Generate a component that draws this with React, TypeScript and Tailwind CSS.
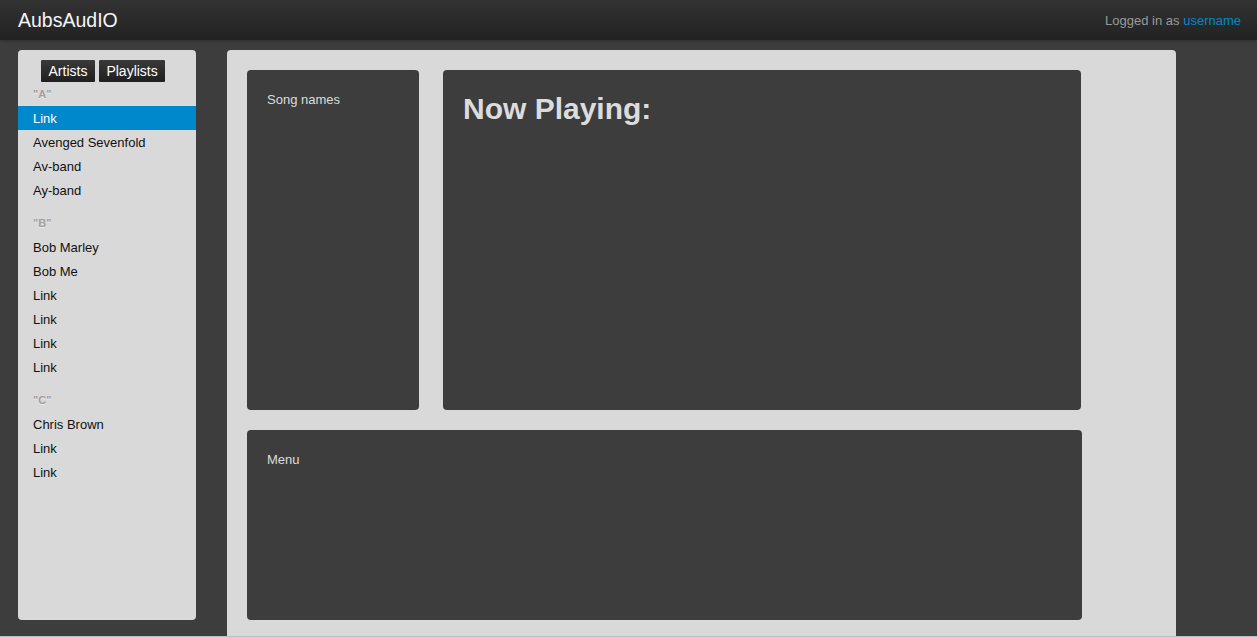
const font = { fontFamily: '"Liberation Sans", Arial, sans-serif' };

const groups = [
  { letter: "A", items: ["Link", "Avenged Sevenfold", "Av-band", "Ay-band"] },
  { letter: "B", items: ["Bob Marley", "Bob Me", "Link", "Link", "Link", "Link"] },
  { letter: "C", items: ["Chris Brown", "Link", "Link"] },
];

function Sidebar() {
  return (
    <div className="w-[178px] h-[570px] shrink-0 rounded-[4px] bg-[#d9d9d9] pt-[10px]">
      <div className="flex gap-[4px] pl-[23px]">
        {["Artists", "Playlists"].map((b) => (
          <button
            key={b}
            className="h-[22px] px-[7.5px] pt-[1px] text-[14px] leading-[21px] text-white bg-gradient-to-b from-[#3a3a3a] to-[#1f1f1f] rounded-[1px]"
          >
            {b}
          </button>
        ))}
      </div>
      {groups.map((g, gi) => (
        <div key={g.letter}>
          <div
            className={`${gi === 0 ? "mt-[2px]" : "mt-[11px]"} mb-[2px] h-[20px] pl-[15px] text-[11px] leading-[20px] font-bold text-[#a0a0a0] [text-shadow:0_1px_0_rgba(255,255,255,0.5)]`}
          >
            "{g.letter}"
          </div>
          {g.items.map((it, i) => {
            const active = gi === 0 && i === 0;
            return (
              <div
                key={i}
                className={`h-[24px] pl-[15px] pt-[2px] text-[13px] leading-[22px] ${active ? "bg-[#0088cc] text-white" : "text-[#111]"}`}
              >
                {it}
              </div>
            );
          })}
        </div>
      ))}
    </div>
  );
}

export default function App() {
  return (
    <div className="h-[637px] w-full flex flex-col bg-[#3d3d3d] overflow-hidden" style={font}>
      <div className="h-[40px] shrink-0 flex items-center justify-between pt-[1px] pl-[18px] pr-[16px] bg-gradient-to-b from-[#333333] to-[#222222] shadow-[0_1px_3px_rgba(0,0,0,0.25)]">
        <span className="text-[19.5px] text-[#f5f5f5]">AubsAudIO</span>
        <span className="text-[13px] text-[#999]">
          Logged in as <span className="text-[#0088cc]">username</span>
        </span>
      </div>
      <div className="flex-1 flex pt-[10px] pl-[18px] gap-[31px] min-h-0">
        <Sidebar />
        <div className="w-[949px] shrink-0 rounded-t-[4px] bg-[#d9d9d9] p-[20px]">
          <div className="flex gap-[24px]">
            <div className="w-[172px] h-[340px] rounded-[4px] bg-[#3d3d3d] px-[20px] pt-[21px] text-[13px] leading-[18px] text-[#dcdcdc]">
              Song names
            </div>
            <div className="w-[638px] h-[340px] rounded-[4px] bg-[#3d3d3d] px-[20px] pt-[21px]">
              <h1 className="text-[30px] leading-[36px] font-bold text-[#dcdcdc]">Now Playing:</h1>
            </div>
          </div>
          <div className="mt-[20px] w-[835px] h-[190px] rounded-[4px] bg-[#3d3d3d] px-[20px] pt-[21px] text-[13px] leading-[18px] text-[#dcdcdc]">
            Menu
          </div>
        </div>
      </div>
      <div className="h-[1px] shrink-0 bg-[#b4c0d0]" />
    </div>
  );
}
